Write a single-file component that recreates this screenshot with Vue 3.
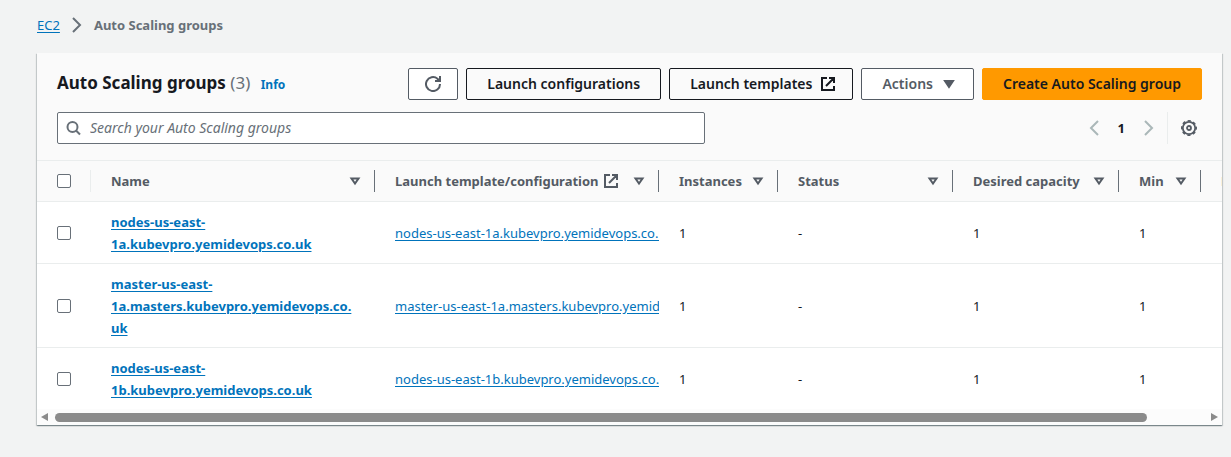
<script setup>
import { ref } from 'vue'

const query = ref('')
const columns = [
  { key: 'name', label: 'Name' },
  { key: 'template', label: 'Launch template/configuration', external: true },
  { key: 'instances', label: 'Instances' },
  { key: 'status', label: 'Status' },
  { key: 'desired', label: 'Desired capacity' },
  { key: 'min', label: 'Min' },
  { key: 'max', label: 'Max' },
]
const groups = [
  'nodes-us-east-1a.kubevpro.yemidevops.co.uk',
  'master-us-east-1a.masters.kubevpro.yemidevops.co.uk',
  'nodes-us-east-1b.kubevpro.yemidevops.co.uk',
]
</script>

<template>
  <div class="page">
    <nav class="crumbs" aria-label="Breadcrumbs">
      <a href="#">EC2</a>
      <svg class="icon" viewBox="0 0 16 16" aria-hidden="true"><path d="M4 1l7 7-7 7" /></svg>
      <span class="current">Auto Scaling groups</span>
    </nav>

    <main class="card">
      <header class="head">
        <div class="row">
          <h1>Auto Scaling groups <span class="count">(3)</span> <a href="#" class="info">Info</a></h1>
          <div class="actions">
            <button type="button" class="btn muted refresh" aria-label="Refresh">
              <svg class="icon" viewBox="0 0 16 16" aria-hidden="true">
                <path d="M15 8a7 7 0 1 1-2.500-5.300L14 4.500" /><path d="M15 0v5h-5M12 4h2" />
              </svg>
            </button>
            <button type="button" class="btn">Launch configurations</button>
            <button type="button" class="btn with-icon">
              Launch templates
              <svg class="icon" viewBox="0 0 16 16" aria-hidden="true">
                <path d="M7 2H2v12h12v-4M9 2h5v5M6 10l8-8" />
              </svg>
            </button>
            <button type="button" class="btn muted with-icon">
              Actions
              <svg class="icon solid" viewBox="0 0 16 16" aria-hidden="true"><path d="M4 5h8l-4 6z" /></svg>
            </button>
            <button type="button" class="btn primary">Create Auto Scaling group</button>
          </div>
        </div>
        <div class="row tools">
          <div class="search">
            <svg class="icon" viewBox="0 0 16 16" aria-hidden="true">
              <circle cx="6.500" cy="7" r="5" /><path d="M14 14.500l-4-4" />
            </svg>
            <input v-model="query" type="search" placeholder="Search your Auto Scaling groups" aria-label="Search your Auto Scaling groups" />
          </div>
          <div class="pager">
            <button type="button" class="plain" aria-label="Previous page">
              <svg class="icon light" viewBox="0 0 16 16" aria-hidden="true"><path d="M12 1L5 8l7 7" /></svg>
            </button>
            <button type="button" class="plain page-no">1</button>
            <button type="button" class="plain" aria-label="Next page">
              <svg class="icon light" viewBox="0 0 16 16" aria-hidden="true"><path d="M4 1l7 7-7 7" /></svg>
            </button>
            <span class="rule"></span>
            <button type="button" class="plain" aria-label="Preferences">
              <svg class="icon" viewBox="0 0 16 16" aria-hidden="true">
                <circle cx="8" cy="8" r="6.200" stroke-width="1.800" />
                <circle cx="8" cy="8" r="7.200" stroke-width="1.600" stroke-dasharray="3.200 2.455" stroke-dashoffset="1.600" />
                <circle cx="8" cy="8" r="2" stroke-width="1.800" />
              </svg>
            </button>
          </div>
        </div>
      </header>

      <div class="scroller">
        <table>
          <colgroup>
            <col class="c-check" />
            <col v-for="c in columns" :key="c.key" :class="'c-' + c.key" />
          </colgroup>
          <thead>
            <tr>
              <th class="check"><div class="cell"><input type="checkbox" aria-label="Select all groups" /></div></th>
              <th v-for="c in columns" :key="c.key" scope="col">
                <div class="cell">
                  <span class="label">{{ c.label }}
                    <svg v-if="c.external" class="icon" viewBox="0 0 16 16" aria-hidden="true">
                      <path d="M7 2H2v12h12v-4M9 2h5v5M6 10l8-8" />
                    </svg>
                  </span>
                  <svg class="icon" viewBox="0 0 16 16" aria-hidden="true"><path d="M4.500 5.500h7L8 10.500z" /></svg>
                </div>
              </th>
            </tr>
          </thead>
          <tbody>
            <tr v-for="g in groups" :key="g">
              <td class="check"><input type="checkbox" :aria-label="'Select ' + g" /></td>
              <td class="name"><a href="#">{{ g }}</a></td>
              <td class="clip"><div><a href="#">{{ g }}</a></div></td>
              <td>1</td>
              <td>-</td>
              <td>1</td>
              <td>1</td>
              <td></td>
            </tr>
          </tbody>
        </table>
      </div>
      <div class="scrollbar" aria-hidden="true">
        <svg viewBox="0 0 8 8"><path d="M7 0v8L0 4z" /></svg>
        <div class="track"><div class="thumb"></div></div>
        <svg viewBox="0 0 8 8"><path d="M1 0v8l7-4z" /></svg>
      </div>
    </main>
  </div>
</template>

<style>
body {
  margin: 0;
  background: #f2f3f3;
}
</style>

<style scoped>
.page {
  padding: 14px 9px 32px 37px;
  font: 13px/22px "Noto Sans", sans-serif;
  color: #16191f;
}
a {
  color: #0073bb;
  text-underline-offset: 2px;
}
.icon {
  flex: none;
  width: 16px;
  height: 16px;
  fill: none;
  stroke: currentColor;
  stroke-width: 2;
}
.crumbs {
  display: flex;
  align-items: center;
  gap: 9px;
  margin-bottom: 17px;
  color: #687078;
}
.current {
  font-weight: 700;
}
.card {
  background: #fff;
  box-shadow: 0 1px 1px #001c244d, 1px 1px 1px #001c2426, -1px 1px 1px #001c2426;
}
.head {
  padding: 15px 20px 16px;
  background: #fafafa;
  border-bottom: 1px solid #eaeded;
}
.row {
  display: flex;
  align-items: center;
  justify-content: space-between;
}
h1 {
  margin: 0;
  font-size: 17px;
  line-height: 28px;
  font-weight: 700;
}
.count {
  font-weight: 400;
  color: #687078;
}
.info {
  margin-left: 6px;
  font-size: 12px;
  text-decoration: none;
}
.actions {
  display: flex;
  gap: 8px;
}
.btn {
  display: flex;
  align-items: center;
  justify-content: center;
  gap: 8px;
  height: 32px;
  padding: 0 20px;
  border: 1px solid #16191f;
  border-radius: 2px;
  background: transparent;
  color: #16191f;
  font: inherit;
  font-size: 14px;
  font-weight: 600;
}
.btn.with-icon {
  padding-right: 16px;
}
.btn.muted {
  border-color: #545b64;
  background: #fff;
  color: #545b64;
}
.btn.refresh {
  padding: 0 16px;
}
.btn.primary {
  border-color: #ff9900;
  background: #ff9900;
}
.solid {
  fill: currentColor;
}
.tools {
  margin-top: 12px;
}
.search {
  display: flex;
  align-items: center;
  gap: 8px;
  box-sizing: border-box;
  width: 648px;
  height: 32px;
  padding: 0 8px;
  border: 1px solid #687078;
  border-radius: 2px;
  background: #fff;
  color: #687078;
}
.search input {
  flex: 1;
  min-width: 0;
  padding: 0;
  border: 0;
  outline: 0;
  background: none;
  font: inherit;
  font-size: 14px;
}
.search input::placeholder {
  color: #687078;
  font-style: italic;
}
.pager {
  display: flex;
  align-items: center;
}
.plain {
  display: flex;
  padding: 0 5px;
  border: 0;
  background: none;
  color: #545b64;
  font: inherit;
}
.plain.page-no {
  padding: 0 11px;
  color: #16191f;
  font-weight: 700;
}
.light {
  color: #aab7b8;
}
.rule {
  width: 1px;
  height: 32px;
  margin: 0 8px 0 5px;
  background: #eaeded;
}
.scroller {
  overflow-x: auto;
  scrollbar-width: none;
}
table {
  width: 1254px;
  min-width: 100%;
  table-layout: fixed;
  border-collapse: separate;
  border-spacing: 0;
}
.c-check { width: 54px; }
.c-name, .c-template { width: 284px; }
.c-instances { width: 119px; }
.c-status { width: 175px; }
.c-desired { width: 166px; }
.c-min { width: 82px; }
th {
  padding: 9px 0;
  background: #fafafa;
  border-bottom: 1px solid #eaeded;
  color: #545b64;
  font-weight: 700;
  text-align: left;
}
.cell {
  display: flex;
  align-items: center;
  justify-content: space-between;
  height: 22px;
  padding: 0 11px 0 20px;
  border-right: 1px solid #687078;
}
.check .cell {
  border-color: #eaeded;
}
.label {
  display: flex;
  align-items: center;
  gap: 4px;
  white-space: nowrap;
}
td {
  padding: 9px 20px 8px;
  border-bottom: 1px solid #eaeded;
}
tbody tr:last-child td {
  border-bottom: 0;
}
.name {
  font-weight: 700;
  overflow-wrap: anywhere;
}
.clip {
  padding-right: 0;
  white-space: nowrap;
}
.clip div {
  overflow: hidden;
}
input[type="checkbox"] {
  appearance: none;
  display: block;
  box-sizing: border-box;
  width: 14px;
  height: 14px;
  margin: 0;
  border: 1px solid #687078;
  border-radius: 2px;
  background: #fff;
}
.scrollbar {
  display: flex;
  align-items: center;
  gap: 6px;
  height: 16px;
  padding: 0 4px;
  background: #fcfcfc;
}
.scrollbar svg {
  width: 8px;
  height: 8px;
  fill: #8b8b8b;
}
.track {
  flex: 1;
}
.thumb {
  width: 95%;
  height: 9px;
  border-radius: 5px;
  background: #8b8b8b;
}
</style>
